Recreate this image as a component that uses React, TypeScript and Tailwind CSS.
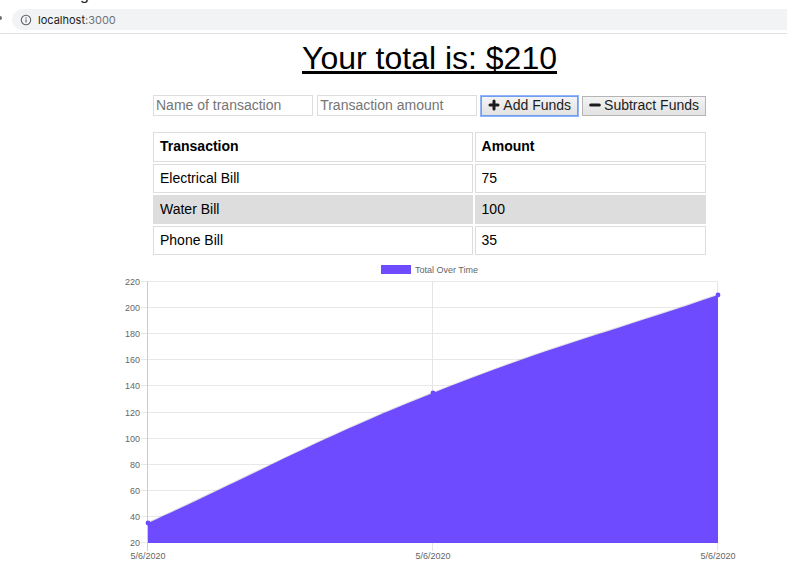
const transactions = [
  { name: "Electrical Bill", amount: 75 },
  { name: "Water Bill", amount: 100 },
  { name: "Phone Bill", amount: 35 },
];

// Plot area of the chart, in viewBox units
const plot = { left: 28, right: 598, top: 24, bottom: 285 };
const ticks = [220, 200, 180, 160, 140, 120, 100, 80, 60, 40, 20];
const points = [
  { date: "5/6/2020", total: 35 },
  { date: "5/6/2020", total: 135 },
  { date: "5/6/2020", total: 210 },
];

const yOf = (value: number) =>
  Math.round(plot.bottom - ((value - 20) / 200) * (plot.bottom - plot.top));
const xOf = (index: number) => plot.left + index * ((plot.right - plot.left) / 2);

function BrowserBar() {
  return (
    <header className="border-b border-[#dfe0e2] bg-white">
      <div className="mb-[6px] flex h-[3px] items-end overflow-hidden pl-4">
        <p className="text-base leading-4 whitespace-nowrap text-[#24292e]">
          Recording transactions in a React finance tracker with a chart of totals
        </p>
      </div>
      <div className="flex items-center pb-[3px]">
        <span className="mr-[10px] mb-1 h-1 w-[2px] rounded-r-xs bg-[#6b6e72]" />
        <div className="flex h-[21px] flex-1 items-center gap-[6px] rounded-l-full bg-[#f1f3f4] pl-2">
          <svg viewBox="0 0 12 12" className="h-3 w-3" fill="none" stroke="#5f6368" strokeWidth="1.1" aria-hidden="true">
            <circle cx="6" cy="6" r="4.7" />
            <path d="M6 5.3v3.2M6 3.3v1.1" />
          </svg>
          <span className="font-[Inter,sans-serif] text-[11px] leading-4 text-[#202124]">
            localhost<span className="text-[#6f7377]">:3000</span>
          </span>
        </div>
      </div>
    </header>
  );
}

function ButtonIcon({ d }: { d: string }) {
  return (
    <svg viewBox="0 0 12 12" className="h-3 w-3" fill="none" stroke="currentColor" strokeWidth="3" strokeLinejoin="round" aria-hidden="true">
      <path d={d} strokeLinecap="round" />
    </svg>
  );
}

function TransactionForm() {
  const field =
    "h-[21px] w-0 min-w-0 flex-1 border border-[#dddddd] bg-white px-[2px] pb-[2px] text-sm leading-4 text-black placeholder:text-[#757575] placeholder:opacity-100 outline-none";
  const button =
    "flex h-5 items-center gap-[3px] border bg-linear-to-b from-[#f4f4f4] to-[#e2e2e2] px-[6px] pb-[2px] text-sm leading-4 whitespace-nowrap text-[#1c1c1c]";
  return (
    <form className="flex w-full max-w-[553px] items-center gap-1" onSubmit={(e) => e.preventDefault()}>
      <input className={field} type="text" aria-label="Name of transaction" placeholder="Name of transaction" />
      <input className={field} type="text" aria-label="Transaction amount" placeholder="Transaction amount" />
      <button type="button" className={`${button} border-[#6f9df0] ring-1 ring-[#8fb4f7]`}>
        <ButtonIcon d="M6 2v8M2 6h8" />
        Add Funds
      </button>
      <button type="button" className={`${button} border-[#b5b5b5]`}>
        <ButtonIcon d="M1.7 6h8.6" />
        Subtract Funds
      </button>
    </form>
  );
}

function TransactionTable() {
  const cell = "border border-[#dddddd] px-[6px] pt-0 pb-[2px] text-left";
  return (
    <table className="-my-[2px] w-full max-w-[557px] table-fixed border-separate border-spacing-[2px] text-sm leading-4 text-black">
      <colgroup>
        <col className="w-[58%]" />
        <col />
      </colgroup>
      <thead>
        <tr className="h-[30px]">
          <th scope="col" className={`${cell} font-bold`}>Transaction</th>
          <th scope="col" className={`${cell} font-bold`}>Amount</th>
        </tr>
      </thead>
      <tbody>
        {transactions.map((t) => (
          <tr key={t.name} className="h-[29px] even:bg-[#dddddd]">
            <td className={cell}>{t.name}</td>
            <td className={cell}>{t.amount}</td>
          </tr>
        ))}
      </tbody>
    </table>
  );
}

function TotalChart() {
  const [a, b, c] = points.map((p, i) => ({ x: xOf(i), y: yOf(p.total) }));
  const curve = `M${a.x} ${a.y} C142 213 197 181 ${b.x} ${b.y} C425 90 484 76 ${c.x} ${c.y}`;
  return (
    <svg
      viewBox="0 0 619 308"
      className="w-full max-w-[619px] text-[9px]"
      role="img"
      aria-label="Total Over Time"
    >
      <rect x="261" y="7" width="30" height="9" fill="#6e4bff" />
      <text x="295" y="15" fill="#666666">Total Over Time</text>
      {ticks.map((tick) => (
        <g key={tick}>
          <rect x="21" y={yOf(tick) - 1} width="577" height="1" fill="#e8e8e8" />
          <text x="20" y={yOf(tick) + 3} textAnchor="end" fill="#666666">{tick}</text>
        </g>
      ))}
      {points.map((p, i) => (
        <g key={i}>
          <rect x={xOf(i) - 1} y="23" width="1" height="270" fill={i === 0 ? "#cccccc" : "#e5e5e5"} />
          <text x={xOf(i)} y="301" textAnchor="middle" fill="#666666">{p.date}</text>
        </g>
      ))}
      <path d={curve} fill="none" stroke="#000000" strokeOpacity="0.12" strokeWidth="2" />
      <path d={`${curve} V${plot.bottom} H${plot.left} Z`} fill="#6e4bff" />
      {[a, b, c].map((p) => (
        <circle key={p.x} cx={p.x} cy={p.y} r="2.4" fill="#6e4bff" />
      ))}
    </svg>
  );
}

export default function App() {
  return (
    <div className="min-h-screen bg-white font-['Liberation_Sans',Arial,sans-serif] text-black">
      <BrowserBar />
      <main className="flex flex-col items-center pl-[72px]">
        <h1 className="mt-1 mb-[17px] text-[32px] leading-10 font-normal underline decoration-[3px] underline-offset-2">
          Your total is: $210
        </h1>
        <TransactionForm />
        <div className="mt-4 flex w-full justify-center">
          <TransactionTable />
        </div>
        <div className="mt-[3px] flex w-full justify-center">
          <TotalChart />
        </div>
      </main>
    </div>
  );
}
